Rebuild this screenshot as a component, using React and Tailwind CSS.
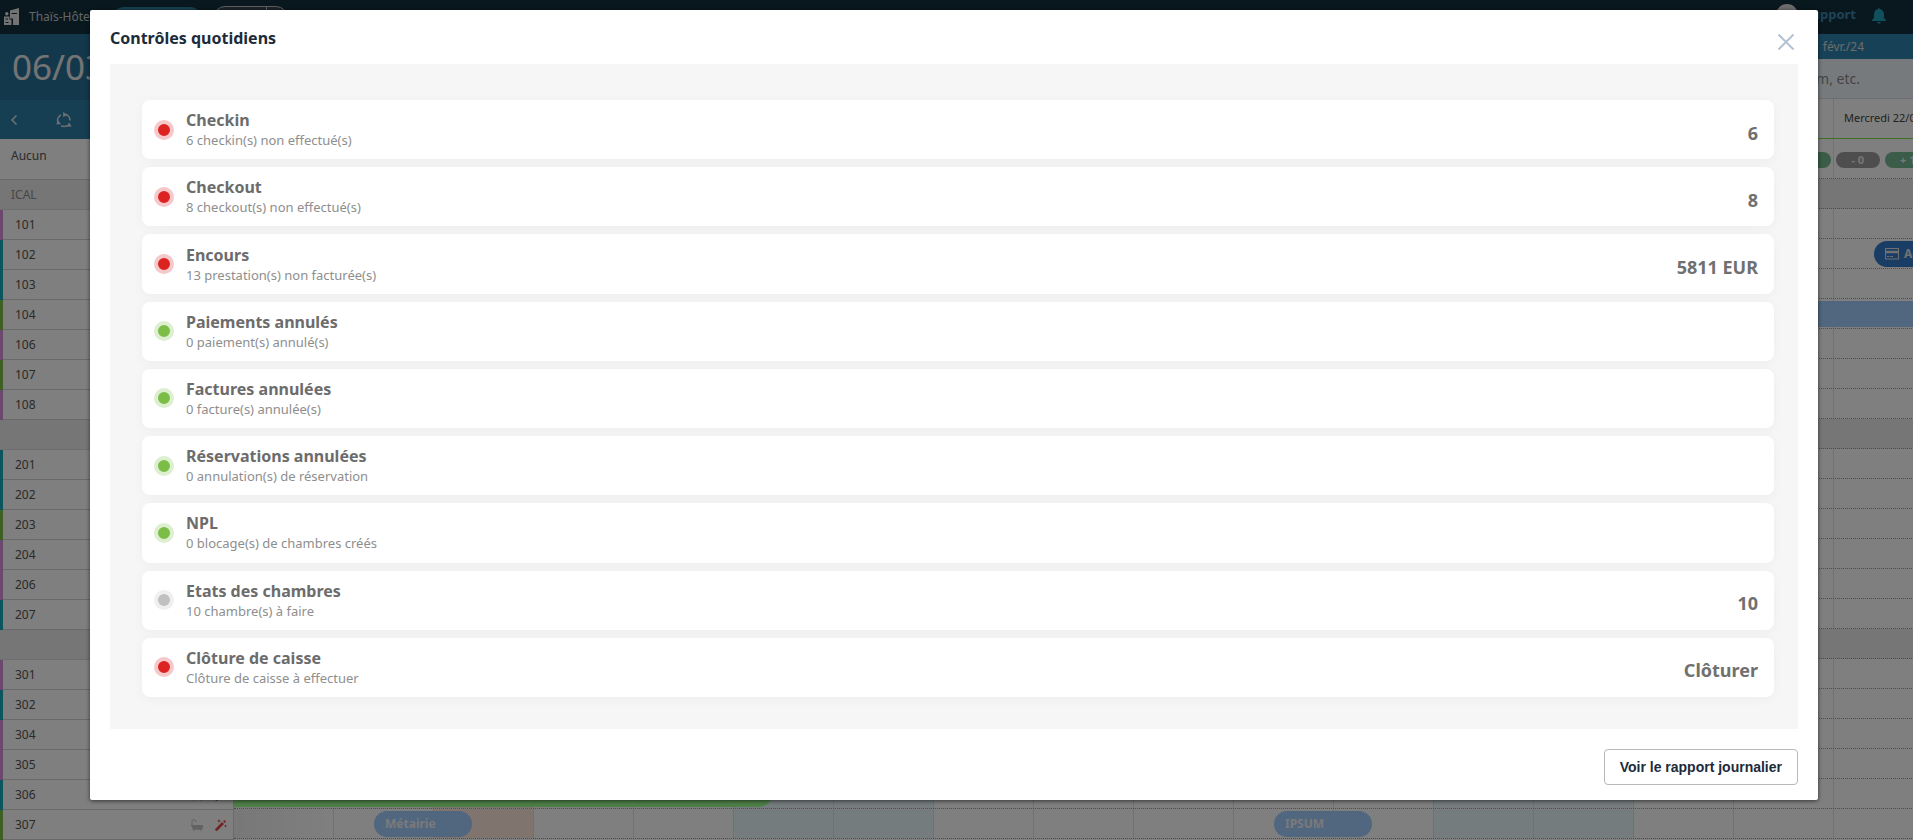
import React from 'react';

const checks = [
  { title: 'Checkin', note: '6 checkin(s) non effectué(s)', value: '6', state: 'red' },
  { title: 'Checkout', note: '8 checkout(s) non effectué(s)', value: '8', state: 'red' },
  { title: 'Encours', note: '13 prestation(s) non facturée(s)', value: '5811 EUR', state: 'red' },
  { title: 'Paiements annulés', note: '0 paiement(s) annulé(s)', value: '', state: 'green' },
  { title: 'Factures annulées', note: '0 facture(s) annulée(s)', value: '', state: 'green' },
  { title: 'Réservations annulées', note: '0 annulation(s) de réservation', value: '', state: 'green' },
  { title: 'NPL', note: '0 blocage(s) de chambres créés', value: '', state: 'green' },
  { title: 'Etats des chambres', note: '10 chambre(s) à faire', value: '10', state: 'grey' },
  { title: 'Clôture de caisse', note: 'Clôture de caisse à effectuer', value: 'Clôturer', state: 'red', action: true },
];

const dots = {
  red: 'bg-[#dd2222] border-[#f6c8ca]',
  green: 'bg-[#7cbd48] border-[#deefd1]',
  grey: 'bg-[#c0c0c0] border-[#efefef]',
};

const stripes = { p: 'border-[#d890dd]', t: 'border-[#18a8bc]', g: 'border-[#7cc04a]' };

const rooms = [
  ['ICAL', 'group'],
  ['101', 'p'], ['102', 't'], ['103', 't'], ['104', 'g'], ['106', 'p'], ['107', 'g'], ['108', 'p'],
  ['', 'group'],
  ['201', 't'], ['202', 't'], ['203', 'g'], ['204', 'p'], ['206', 'p'], ['207', 't'],
  ['', 'group'],
  ['301', 'p'], ['302', 't'], ['304', 'p'], ['305', 'p'], ['306', 't'], ['307', 'g'],
];

const bookings = {
  '102': [{ cls: 'left-[1640px] w-[180px] rounded-full bg-[#347acc] pl-[11px] text-[#e0e0e0]', text: 'Agence', card: true }],
  '104': [{ cls: 'left-[1200px] w-[600px] bg-[#a2cdff]', text: '' }],
  '306': [{ cls: 'left-0 w-[538px] rounded-r-full bg-[#9cff8f]', text: '' }],
  '307': [
    { cls: 'left-[140px] w-[98px] rounded-full bg-[#a2cdff] pl-[11px] text-[#f4f4f4]', text: 'Métairie' },
    { cls: 'left-[1040px] w-[98px] rounded-full bg-[#a2cdff] pl-[11px] text-[#f4f4f4]', text: 'IPSUM' },
  ],
};

const dayNames = ['Lun.', 'Mar.', 'Mer.', 'Jeu.', 'Ven.', 'Sam.', 'Dim.'];
const days = Array.from({ length: 17 }, (_, i) =>
  i === 16 ? 'Mercredi 22/03' : `${dayNames[i % 7]} ${String(6 + i).padStart(2, '0')}/03`,
);

function dayTint(i) {
  if (i === 0) return 'bg-linear-to-r from-[#f0f0f0] to-white';
  if (i === 2) return 'bg-[#ffeadd]';
  if ([5, 6, 12, 13].includes(i)) return 'bg-[#e8f8fd]';
  return '';
}

function HotelLogo() {
  return (
    <svg aria-hidden="true" width="16" height="18" viewBox="0 0 16 18" fill="#e6e6e6">
      <path fillRule="evenodd" d="M6 2.500 15 0V17H9V10.500H6ZM7.500 5V6H13V5Z" />
      <path fillRule="evenodd" d="M0 8.500H5.500V11.500H7.500V17H0ZM1.500 10.500V11.500H4V10.500ZM1.500 14V15H4.500V14Z" />
      <circle cx="2.800" cy="5.800" r="1.700" />
    </svg>
  );
}

function CycleIcon() {
  return (
    <svg aria-hidden="true" width="16" height="16" viewBox="0 0 16 16" fill="none" stroke="#d8e0e4" strokeWidth="1.600">
      <path d="M9 2.400A6 6 0 0 1 14 8.500M11.300 13.500A6 6 0 0 1 5 13.600M2 10.500A6 6 0 0 1 5 3" />
      <path d="M7 0 11 2.800 7.300 5.200ZM15.800 14.500 10.600 14.800 13 10.600ZM.2 12.500 2.200 8.400 5 12Z" fill="#d8e0e4" stroke="none" />
    </svg>
  );
}

function BathIcon() {
  return (
    <svg aria-hidden="true" width="12" height="12" viewBox="0 0 12 12" fill="#c4c4c4">
      <path d="M0 6H12V7.500Q12 10 10.500 10.500V12H9.500V10.700H3V12H2V10.200Q.8 9.500.8 7.500H0Z" />
      <path d="M1 6V2Q1 .5 2.500.5T4.200 2" fill="none" stroke="#c4c4c4" />
      <path d="M3 2.500 5.500 1.500V3Z" />
    </svg>
  );
}

function WandIcon() {
  return (
    <svg aria-hidden="true" width="12" height="12" viewBox="0 0 12 12" fill="#e04a4a">
      <path d="M0 10.200 7 3 9 5 2 12Q0 12 0 10.200Z" />
      <path d="M8 2.200 9.500 1 11 2.500 9.700 4ZM4 0 4.600 1.400 6 2 4.600 2.600 4 4 3.400 2.600 2 2 3.400 1.400ZM10.500 5.500 11 6.500 12 7 11 7.500 10.500 8.500 10 7.500 9 7 10 6.500Z" />
    </svg>
  );
}

function CardIcon() {
  return (
    <svg aria-hidden="true" width="14" height="12" viewBox="0 0 14 12" fill="none" stroke="#e0e0e0">
      <rect x="0.500" y="0.500" width="13" height="10.500" />
      <path d="M1 4H13" strokeWidth="2.500" />
      <path d="M2 8.500H4M5 8.500H8" />
    </svg>
  );
}

function Sidebar() {
  return (
    <aside className="w-[234px] shrink-0 border-r border-[#d4d4d4] text-[#555]">
      <div className="flex h-[66px] items-center bg-linear-to-b from-[#267199] to-[#287096] pl-3 text-[35px] text-[#e8e8e8]">06/03/24</div>
      <div className="flex h-[39px] items-center gap-[39px] bg-[#2c7ea9] pl-[11px]">
        <button aria-label="Jour précédent">
          <svg width="6" height="10" viewBox="0 0 6 10" fill="none" stroke="#e6e6e6" strokeWidth="1.500"><path d="M5.500.5 1 5l4.500 4.500" /></svg>
        </button>
        <button aria-label="Actualiser"><CycleIcon /></button>
      </div>
      <div className="h-[41px] border-b border-[#d4d4d4] pt-[7px] pl-[11px] text-xs leading-5 text-[#555]">Aucun</div>
      {rooms.map(([name, kind], i) =>
        kind === 'group' ? (
          <div key={i} className="flex h-[30px] items-center border-b border-[#dcdcdc] bg-[#ededed] pl-[11px] text-xs text-[#8c8c8c]">{name}</div>
        ) : (
          <div key={i} className={`flex h-[30px] items-center border-l-3 ${stripes[kind]}`}>
            <div className="flex h-full grow items-center border-b border-[#d4d4d4] pr-[6px] pl-3 text-xs">
              <span className="grow">{name}</span>
              <span className="flex gap-3"><BathIcon /><WandIcon /></span>
            </div>
          </div>
        ),
      )}
    </aside>
  );
}

function Planning() {
  return (
    <section className="min-w-0 grow overflow-hidden">
      <div className="flex h-[25px] items-center justify-end bg-[#2f83ae] pr-[49px] text-xs text-[#d8d8d8]">févr./24</div>
      <div className="h-10 border-b border-[#d8dde2] bg-[#eff5fb]">
        <input aria-label="Recherche" placeholder="Client, chambre, nom, etc." className="h-full w-full pr-[53px] text-right text-sm outline-none placeholder:text-[#888]" />
      </div>
      <div className="w-[1700px]">
        <div className="grid h-10 grid-cols-17 border-b border-[#7ae04c]">
          {days.map((d) => (
            <div key={d} className="flex items-center border-r border-[#e2e2e2] pl-[10px] text-[11px] whitespace-nowrap text-[#444]">{d}</div>
          ))}
        </div>
        <div className="grid h-10 grid-cols-17 border-b border-dotted border-[#999]">
          {days.map((d) => (
            <div key={d} className="flex items-center gap-[5px] border-r border-[#e2e2e2] px-[2px] pt-[2px] text-[11px] font-bold text-[#eee]">
              <span className="h-4 grow rounded-full bg-[#9c9c9c] text-center leading-4">- 0</span>
              <span className="h-4 grow rounded-full bg-[#74b891] text-center leading-4">+ 1</span>
            </div>
          ))}
        </div>
        {rooms.map(([name, kind], r) => (
          <div key={r} className={`relative grid h-[30px] grid-cols-17 border-b border-dotted border-[#999] ${kind === 'group' ? 'bg-[#ededed]' : ''}`}>
            {days.map((d, i) => (
              <div key={d} className={`border-r ${kind === 'group' ? 'border-[#e9e9e9]' : `border-[#e2e2e2] ${dayTint(i)}`}`} />
            ))}
            {(bookings[name] || []).map((b, i) => (
              <div key={i} className={`absolute top-[2px] flex h-[26px] items-center gap-[5px] text-xs font-bold ${b.cls}`}>
                {b.card && <CardIcon />}
                {b.text}
              </div>
            ))}
          </div>
        ))}
      </div>
    </section>
  );
}

function TopBar() {
  return (
    <header className="flex h-[34px] items-start bg-[#13303d] pl-1">
      <div className="flex h-full items-center gap-[9px] text-xs text-[#c4ccd0]">
        <HotelLogo />
        <span className="w-[72px] whitespace-nowrap">Thaïs-Hôtel</span>
      </div>
      <button aria-label="Hôtel" className="mt-[7px] ml-[11px] h-6 w-[90px] rounded-full bg-[#2f7e9c]" />
      <div className="mt-[6px] ml-[11px] flex h-6 w-[75px] rounded-full border border-[#bbb] bg-[#3a4650]">
        <span className="w-[53px] border-r border-[#bbb]" />
      </div>
      <div className="mt-1 ml-auto flex items-start pr-[27px]">
        <span className="size-[22px] rounded-full bg-[#d8d8d8]" />
        <a href="#support" className="ml-[6px] text-[13px] leading-5 font-bold text-[#3c87ae]">Support</a>
        <svg role="img" aria-label="Notifications" className="mt-1 ml-4" width="14" height="16" viewBox="0 0 14 16" fill="#209fb8">
          <path d="M7 0 8 1Q12 2 12 6.500V10L14 12V13H0V12L2 10V6.500Q2 2 6 1ZM5 14H9Q8.500 15.500 7 15.500T5 14Z" />
        </svg>
      </div>
    </header>
  );
}

function CheckCard({ check }) {
  return (
    <li className="flex flex-1 items-center rounded-lg bg-white pr-4 pl-3 shadow-[0_2px_12px_rgba(0,0,0,0.04)]">
      <span className={`size-5 shrink-0 rounded-full border-4 ${dots[check.state]}`} />
      <div className="ml-3 grow pt-px">
        <h3 className="text-base leading-5 font-bold text-[#6c6c6c]">{check.title}</h3>
        <p className="text-[13px] leading-5 text-[#8e8e8e]">{check.note}</p>
      </div>
      {check.action ? (
        <button className="pt-[6px] text-lg font-bold text-[#707070]">{check.value}</button>
      ) : (
        <span className="pt-[6px] text-lg font-bold text-[#707070]">{check.value}</span>
      )}
    </li>
  );
}

export default function App() {
  return (
    <div className="relative h-screen overflow-hidden bg-white font-['Noto_Sans','Open_Sans',sans-serif]">
      <TopBar />
      <div className="flex">
        <Sidebar />
        <Planning />
      </div>
      <div className="absolute inset-0 bg-black/50 pt-[10px] pr-[95px] pl-[90px]">
        <div role="dialog" aria-modal="true" aria-labelledby="dialog-title" className="rounded-[2px] bg-white px-5 pb-[15px] shadow-[0_1px_4px_rgba(0,0,0,0.6)]">
          <div className="flex h-[54px] items-center justify-between pr-1">
            <h2 id="dialog-title" className="pt-[2px] text-base leading-6 font-bold text-[#1c2b3a]">Contrôles quotidiens</h2>
            <button aria-label="Fermer" className="pt-[10px]">
              <svg width="16" height="16" viewBox="0 0 16 16" stroke="#b3c3d3" strokeWidth="2" fill="none"><path d="M.5.5 15.500 15.500M15.500.5.5 15.500" /></svg>
            </button>
          </div>
          <ul className="flex min-h-[665px] flex-col gap-2 bg-[#f6f6f6] pt-9 pr-6 pb-8 pl-8">
            {checks.map((c) => <CheckCard key={c.title} check={c} />)}
          </ul>
          <div className="flex justify-end pt-5">
            <button className="h-9 rounded border border-[#b9b9b9] px-[15px] font-['Liberation_Sans',Arial,sans-serif] text-sm font-bold text-[#1c2b3a]">Voir le rapport journalier</button>
          </div>
        </div>
      </div>
    </div>
  );
}
